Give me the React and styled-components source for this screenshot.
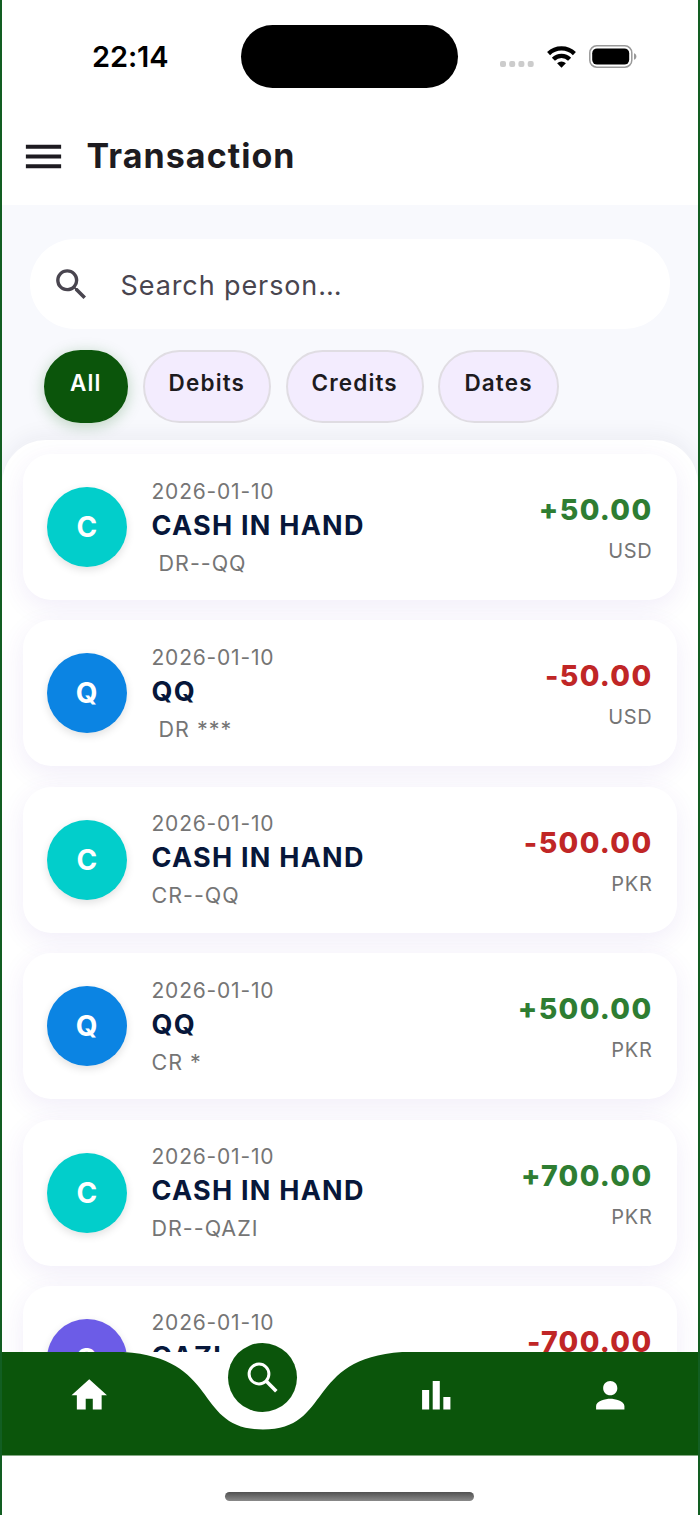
import React, { useState } from "react";
import styled, { createGlobalStyle } from "styled-components";
import { MdBarChart, MdHome, MdMenu, MdPerson, MdSearch } from "react-icons/md";

const GlobalStyle = createGlobalStyle`
  * {
    box-sizing: border-box;
  }

  body {
    margin: 0;
    background: #ffffff;
    font-family: Inter, "Liberation Sans", sans-serif;
  }

  button {
    font-family: inherit;
    cursor: pointer;
  }
`;

const Phone = styled.div`
  width: 700px;
  height: 1515px;
  display: flex;
  flex-direction: column;
  overflow: hidden;
  background: #ffffff;
  border-left: 2px solid #125e22;
  border-right: 2px solid #125e22;
`;

const StatusBar = styled.div`
  flex: none;
  height: 113px;
  padding: 24.5px 61px 0 90px;
  display: grid;
  grid-template-columns: 149px 217px 1fr;
  align-items: start;
`;

const Clock = styled.span`
  font-size: 29px;
  line-height: 63px;
  font-weight: 600;
  letter-spacing: -0.1px;
  color: #000000;
`;

const Island = styled.div`
  height: 63.5px;
  border-radius: 32px;
  background: #000000;
`;

const StatusIcons = styled.div`
  height: 64px;
  display: flex;
  align-items: center;
  justify-content: flex-end;
`;

const Header = styled.header`
  flex: none;
  height: 92px;
  padding: 0 18px 6px;
  display: flex;
  align-items: center;
  gap: 19.5px;
  color: #1d1b20;
`;

const IconButton = styled.button`
  padding: 0;
  border: 0;
  background: none;
  display: flex;
  color: inherit;
  font-size: ${(props) => props.$size}px;
`;

const Title = styled.h1`
  margin: 0;
  font-size: 34px;
  line-height: 42px;
  font-weight: 700;
  letter-spacing: 1.05px;
`;

const Body = styled.main`
  flex: none;
  height: 1147px;
  overflow: hidden;
  display: flex;
  flex-direction: column;
  background: #f8f9fd;
`;

const SearchBox = styled.label`
  flex: none;
  height: 90px;
  margin: 34px 28px 0;
  padding-left: 20.5px;
  display: flex;
  align-items: center;
  gap: 29px;
  border-radius: 45px;
  background: #ffffff;
  color: #49454f;
  font-size: 41px;
`;

const Placeholder = styled.span`
  margin-top: 4px;
  font-size: 27px;
  line-height: 36px;
  letter-spacing: 0.9px;
`;

const Chips = styled.div`
  flex: none;
  display: flex;
  gap: 14.6px;
  padding: 21px 41.5px 17px;
`;

const Chip = styled.button`
  width: ${(props) => props.$width}px;
  height: 73px;
  padding: 0 0 8px;
  border: 2px solid ${(props) => (props.$active ? "#0b550b" : "#e0dde3")};
  border-radius: 37px;
  background: ${(props) => (props.$active ? "#0b550b" : "#f3ecfe")};
  box-shadow: ${(props) =>
    props.$active ? "0 3px 15px rgba(11, 105, 11, 0.26)" : "none"};
  color: ${(props) => (props.$active ? "#ffffff" : "#1d1b20")};
  font-size: 22.5px;
  font-weight: 600;
  letter-spacing: 1.15px;
`;

const Sheet = styled.section`
  flex: 1;
  padding: 14px 21px 0;
  display: flex;
  flex-direction: column;
  gap: 20.4px;
  border-radius: 44px 44px 0 0;
  background: #ffffff;
  box-shadow: 0 -4px 22px rgba(30, 30, 60, 0.06);
`;

const Card = styled.article`
  flex: none;
  height: 146px;
  padding: 0 24.5px 0 24px;
  display: flex;
  align-items: center;
  border-radius: 28px;
  background: #ffffff;
  box-shadow: 0 7px 26px rgba(103, 58, 183, 0.09);
`;

const Avatar = styled.div`
  flex: none;
  width: 80px;
  height: 80px;
  margin-right: 24.5px;
  padding-right: 0.5px;
  display: flex;
  align-items: center;
  justify-content: center;
  border-radius: 50%;
  background: ${(props) => props.$color};
  box-shadow: 0 3px 8px rgba(0, 0, 0, 0.12);
  color: #ffffff;
  font-size: 28px;
  font-weight: 700;
`;

const Details = styled.div`
  flex: 1;
  display: flex;
  flex-direction: column;
  white-space: pre;
`;

const Muted = styled.span`
  font-size: ${(props) => props.$size || 21}px;
  line-height: 30px;
  letter-spacing: ${(props) => props.$spacing || 0.8}px;
  color: #757575;
`;

const Name = styled.span`
  margin: 1px 0 4px;
  font-size: 27px;
  line-height: 36px;
  font-weight: 700;
  letter-spacing: 1.25px;
  color: #07173a;
`;

const Totals = styled.div`
  margin-top: 4px;
  display: flex;
  flex-direction: column;
  align-items: flex-end;
  gap: 8px;
`;

const Amount = styled.span`
  font-size: 28.5px;
  line-height: 36px;
  font-weight: 800;
  letter-spacing: 1.35px;
  color: ${(props) => (props.$negative ? "#c02626" : "#2e7d32")};
`;

const NavBar = styled.nav`
  position: relative;
  flex: none;
  height: 103.5px;
  padding-right: 1px;
  display: grid;
  grid-template-columns: repeat(4, 1fr);
  color: #ffffff;
`;

const NavShape = styled.svg`
  position: absolute;
  inset: 0;
`;

const NavItem = styled.button`
  position: relative;
  height: 86px;
  padding: 0;
  border: 0;
  background: none;
  display: flex;
  align-items: center;
  justify-content: center;
  color: inherit;
  font-size: 42.5px;
`;

const Bubble = styled.span`
  position: absolute;
  top: -9px;
  left: 52.5px;
  width: 69px;
  height: 69px;
  display: flex;
  align-items: center;
  justify-content: center;
  border-radius: 50%;
  background: #0b550b;
`;

const HomeArea = styled.div`
  flex: 1;
  display: flex;
  justify-content: center;
  padding: 36.5px 1px 0 0;
`;

const HomeIndicator = styled.div`
  width: 249px;
  height: 9px;
  border-radius: 5px;
  background: linear-gradient(#505050, #8a8a8a);
`;

const filters = [
  { label: "All", width: 84.5 },
  { label: "Debits", width: 128.5 },
  { label: "Credits", width: 138 },
  { label: "Dates", width: 120.5 },
];

const teal = "#02cecb";
const blue = "#0b84e3";
const violet = "#6c5ce7";

const transactions = [
  { id: 1, name: "CASH IN HAND", note: " DR--QQ", amount: "+50.00", currency: "USD", color: teal },
  { id: 2, name: "QQ", note: " DR ***", amount: "-50.00", currency: "USD", color: blue },
  { id: 3, name: "CASH IN HAND", note: "CR--QQ", amount: "-500.00", currency: "PKR", color: teal },
  { id: 4, name: "QQ", note: "CR *", amount: "+500.00", currency: "PKR", color: blue },
  { id: 5, name: "CASH IN HAND", note: "DR--QAZI", amount: "+700.00", currency: "PKR", color: teal },
  { id: 6, name: "QAZI", note: "", amount: "-700.00", currency: "", color: violet },
];

const Dots = styled.svg`
  margin: 15px 13px 0 0;
`;

const SignalDots = () => (
  <Dots width="34" height="8" viewBox="0 0 34 8" fill="#cccccc">
    <rect x="0" y="1" width="6" height="6" rx="2" />
    <rect x="9.2" y="1" width="6" height="6" rx="2" />
    <rect x="18.4" y="1" width="6" height="6" rx="2" />
    <rect x="27.7" y="1" width="6" height="6" rx="2" />
  </Dots>
);

const WifiIcon = styled.svg`
  margin-right: 13px;
`;

const Wifi = () => (
  <WifiIcon width="29" height="22" viewBox="0 0 29 22">
    <g fill="none" stroke="#000000" strokeWidth="4.3">
      <path d="M1.6 7.6a18.4 18.4 0 0 1 25.8 0" />
      <path d="M6.4 13.2a11.4 11.4 0 0 1 16.2 0" />
    </g>
    <path d="M14.5 21.8l-4.4-4.6a6.3 6.3 0 0 1 8.8 0z" />
  </WifiIcon>
);

const Battery = () => (
  <svg width="48" height="23" viewBox="0 0 48 23">
    <rect x="0.8" y="0.8" width="42" height="21.4" rx="7" fill="none" stroke="#999999" strokeWidth="1.5" />
    <rect x="3.2" y="3.4" width="37" height="16.2" rx="4.8" />
    <path d="M45 8.2c1.6.6 2.4 1.8 2.4 3.3s-.8 2.7-2.4 3.3z" fill="#999999" />
  </svg>
);

const ThinSearch = () => (
  <svg width="32" height="32" viewBox="0 0 32 32" fill="none" stroke="#ffffff">
    <circle cx="12" cy="12" r="9.9" strokeWidth="3" />
    <path d="M19.4 19.3L29.3 29.2" strokeWidth="3.6" />
  </svg>
);

const TransactionCard = ({ item }) => (
  <Card>
    <Avatar $color={item.color}>{item.name[0]}</Avatar>
    <Details>
      <Muted>2026-01-10</Muted>
      <Name>{item.name}</Name>
      <Muted $size={21.5} $spacing={1}>{item.note || " "}</Muted>
    </Details>
    <Totals>
      <Amount $negative={item.amount.startsWith("-")}>{item.amount}</Amount>
      <Muted $size={20} $spacing={0.7}>{item.currency || "\u00a0"}</Muted>
    </Totals>
  </Card>
);

const App = () => {
  const [active, setActive] = useState("All");

  return (
    <>
      <GlobalStyle />
      <Phone>
        <StatusBar>
          <Clock>22:14</Clock>
          <Island />
          <StatusIcons>
            <SignalDots />
            <Wifi />
            <Battery />
          </StatusIcons>
        </StatusBar>

        <Header>
          <IconButton $size={47}>
            <MdMenu />
          </IconButton>
          <Title>Transaction</Title>
        </Header>

        <Body>
          <SearchBox>
            <MdSearch />
            <Placeholder>Search person…</Placeholder>
          </SearchBox>
          <Chips>
            {filters.map(({ label, width }) => (
              <Chip
                key={label}
                $width={width}
                $active={label === active}
                onClick={() => setActive(label)}
              >
                {label}
              </Chip>
            ))}
          </Chips>
          <Sheet>
            {transactions.map((item) => (
              <TransactionCard key={item.id} item={item} />
            ))}
          </Sheet>
        </Body>

        <NavBar>
          <NavShape width="696" height="103.5" viewBox="0 0 696 103.5" fill="#0b550b">
            <path d="M0 0H121.8C219.2 6.5 191.4 77.5 261 77.5S302.8 6.5 400.2 0H696V103.5H0Z" />
          </NavShape>
          <NavItem>
            <MdHome />
          </NavItem>
          <NavItem>
            <Bubble>
              <ThinSearch />
            </Bubble>
          </NavItem>
          <NavItem>
            <MdBarChart />
          </NavItem>
          <NavItem>
            <MdPerson />
          </NavItem>
        </NavBar>
        <HomeArea>
          <HomeIndicator />
        </HomeArea>
      </Phone>
    </>
  );
};

export default App;
